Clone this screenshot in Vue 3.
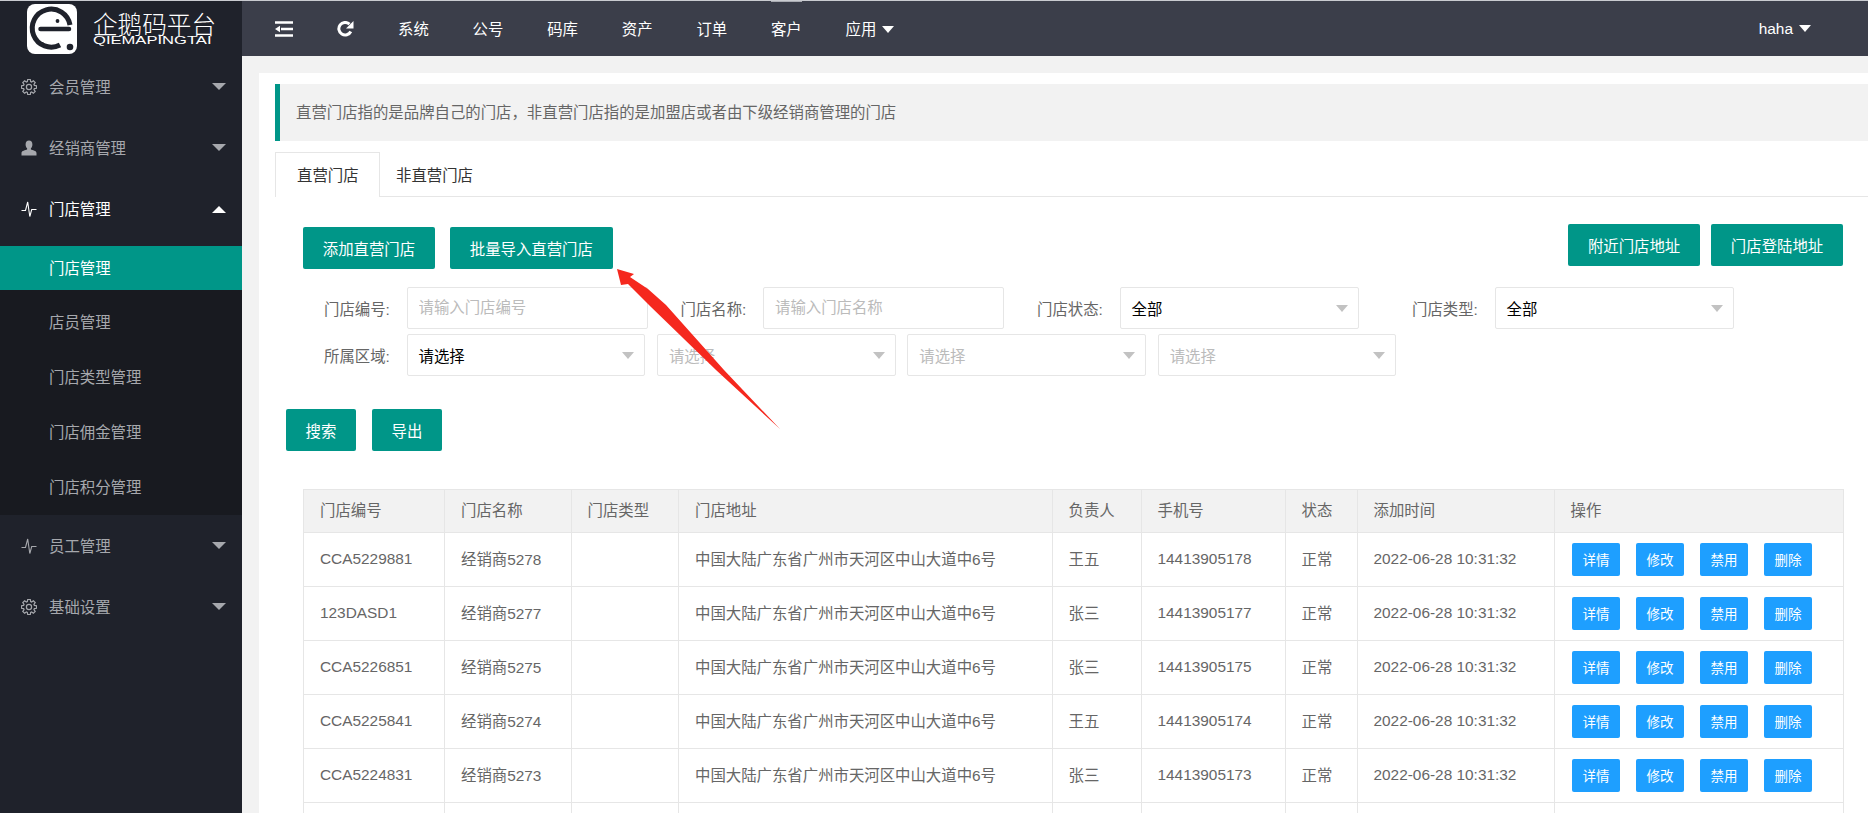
<template>
  <div class="page">
    <aside class="sidebar">
      <div class="brand">
        <svg class="brand-logo" viewBox="0 0 50 50">
          <rect width="50" height="50" rx="8" fill="#fff" />
          <path d="M43 21 A19 19 0 1 0 33 41" fill="none" stroke="#1f222b" stroke-width="5" />
          <path d="M13.5 25 H42" stroke="#1f222b" stroke-width="4.5" stroke-linecap="round" />
          <circle cx="30.5" cy="17" r="1.9" fill="#1f222b" />
          <circle cx="43" cy="43" r="3.3" fill="#1f222b" />
          <circle cx="15" cy="40" r="2" fill="#1f222b" />
        </svg>
        <div class="brand-text">
          <div class="brand-cn">企鹅码平台</div>
          <div class="brand-en">QIEMAPINGTAI</div>
        </div>
      </div>

      <div class="menu-item">
        <svg class="menu-icon" viewBox="0 0 16 16"><path :d="gearPath" fill="none" stroke="currentColor" stroke-width="1.2" /><circle cx="8" cy="8" r="2.6" fill="none" stroke="currentColor" stroke-width="1.2" /></svg>
        <span>会员管理</span><i class="caret"></i>
      </div>
      <div class="menu-item">
        <svg class="menu-icon" viewBox="0 0 16 16"><path d="M8 .5c2.2 0 3.4 1.700 3.400 3.900 0 1.700-.7 3-1.500 3.900v1.300c1.600.7 5.600 1.400 5.600 3.300V15.500H.5v-2.600c0-1.900 4-2.600 5.600-3.300V8.300C5.300 7.400 4.600 6.100 4.600 4.400 4.600 2.200 5.800.5 8 .5z" fill="currentColor" /></svg>
        <span>经销商管理</span><i class="caret"></i>
      </div>
      <div class="menu-item open">
        <svg class="menu-icon" viewBox="0 0 16 16"><path d="M.5 9.500H4.500L6.700 1 8.800 15.500 10.700 8.500H15.500" fill="none" stroke="currentColor" stroke-width="1.100" /></svg>
        <span>门店管理</span><i class="caret up"></i>
      </div>
      <div class="submenu">
        <div v-for="(item, index) in subMenu" :key="item" class="sub-item" :class="{ active: index === 0 }">{{ item }}</div>
      </div>
      <div class="menu-item">
        <svg class="menu-icon" viewBox="0 0 16 16"><path d="M.5 9.500H4.500L6.700 1 8.800 15.500 10.700 8.500H15.500" fill="none" stroke="currentColor" stroke-width="1.100" /></svg>
        <span>员工管理</span><i class="caret"></i>
      </div>
      <div class="menu-item">
        <svg class="menu-icon" viewBox="0 0 16 16"><path :d="gearPath" fill="none" stroke="currentColor" stroke-width="1.2" /><circle cx="8" cy="8" r="2.6" fill="none" stroke="currentColor" stroke-width="1.2" /></svg>
        <span>基础设置</span><i class="caret"></i>
      </div>
    </aside>

    <div class="right">
      <header class="topbar">
        <svg class="top-icon indent" viewBox="0 0 18 16">
          <path d="M0 1.500H18M6 8H18M0 14.500H18" stroke="#fff" stroke-width="2.700" />
          <path d="M0 8L5 4.800V11.200z" fill="#fff" />
        </svg>
        <svg class="top-icon refresh" viewBox="0 0 17 16">
          <path d="M13.800 10.500A6.300 6.300 0 1 1 12.500 3.200" fill="none" stroke="#fff" stroke-width="3" />
          <path d="M16.500 0V7.500H9z" fill="#fff" />
        </svg>
        <nav class="nav">
          <a v-for="item in navItems" :key="item" class="nav-link" :class="{ loading: item === '客户' }">{{ item }}</a>
          <a class="nav-link">应用<i class="caret white"></i></a>
        </nav>
        <div class="user">haha<i class="caret white"></i></div>
      </header>

      <main class="content">
        <section class="panel">
          <div class="alert">直营门店指的是品牌自己的门店，非直营门店指的是加盟店或者由下级经销商管理的门店</div>

          <div class="tabs">
            <div class="tab active">直营门店</div>
            <div class="tab">非直营门店</div>
          </div>

          <div class="toolbar">
            <div class="btn-group">
              <button class="btn">添加直营门店</button>
              <button class="btn">批量导入直营门店</button>
            </div>
            <div class="btn-group right-btns">
              <button class="btn">附近门店地址</button>
              <button class="btn">门店登陆地址</button>
            </div>
          </div>

          <div class="filters">
            <div class="filter-row">
              <div class="field">
                <label>门店编号:</label>
                <input class="control wide" placeholder="请输入门店编号" />
              </div>
              <div class="field">
                <label>门店名称:</label>
                <input class="control wide" placeholder="请输入门店名称" />
              </div>
              <div class="field">
                <label>门店状态:</label>
                <div class="control status select">全部<i class="caret grey"></i></div>
              </div>
              <div class="field far">
                <label>门店类型:</label>
                <div class="control status select">全部<i class="caret grey"></i></div>
              </div>
            </div>
            <div class="filter-row">
              <div class="field">
                <label>所属区域:</label>
                <div class="areas">
                  <div class="control select">请选择<i class="caret grey"></i></div>
                  <div v-for="n in 3" :key="n" class="control select muted">请选择<i class="caret grey"></i></div>
                </div>
              </div>
            </div>
          </div>

          <div class="search-btns">
            <button class="btn narrow">搜索</button>
            <button class="btn narrow">导出</button>
          </div>

          <table class="table">
            <colgroup>
              <col v-for="w in colWidths" :key="w.id" :style="{ width: w.px + 'px' }" />
            </colgroup>
            <thead>
              <tr>
                <th v-for="h in headers" :key="h">{{ h }}</th>
              </tr>
            </thead>
            <tbody>
              <tr v-for="row in rows" :key="row.code">
                <td>{{ row.code }}</td>
                <td class="cjk">{{ row.name }}</td>
                <td></td>
                <td class="cjk">中国大陆广东省广州市天河区中山大道中6号</td>
                <td class="cjk">{{ row.owner }}</td>
                <td>{{ row.phone }}</td>
                <td class="cjk">正常</td>
                <td>2022-06-28 10:31:32</td>
                <td class="actions">
                  <button v-for="a in actions" :key="a" class="mini">{{ a }}</button>
                </td>
              </tr>
              <tr>
                <td v-for="h in headers" :key="h"></td>
              </tr>
            </tbody>
          </table>
        </section>
      </main>
    </div>

    <svg class="annotation" viewBox="0 0 1868 813">
      <polygon points="617,269 634,274 630,277 648,289 666,305 724,370 780,429 716,370 650,306 628,284 621,285" fill="#f5281e" />
    </svg>
  </div>
</template>

<script setup>
const subMenu = ['门店管理', '店员管理', '门店类型管理', '门店佣金管理', '门店积分管理']
const navItems = ['系统', '公号', '码库', '资产', '订单', '客户']
const headers = ['门店编号', '门店名称', '门店类型', '门店地址', '负责人', '手机号', '状态', '添加时间', '操作']
const actions = ['详情', '修改', '禁用', '删除']

const colWidths = [141, 126.5, 107.5, 373.5, 89, 144, 72, 197, 289].map((px, id) => ({ id, px }))

const rows = [
  { code: 'CCA5229881', name: '经销商5278', owner: '王五', phone: '14413905178' },
  { code: '123DASD1', name: '经销商5277', owner: '张三', phone: '14413905177' },
  { code: 'CCA5226851', name: '经销商5275', owner: '张三', phone: '14413905175' },
  { code: 'CCA5225841', name: '经销商5274', owner: '王五', phone: '14413905174' },
  { code: 'CCA5224831', name: '经销商5273', owner: '张三', phone: '14413905173' }
]

// gear outline, 8 teeth
const buildGear = () => {
  const pts = []
  for (let i = 0; i < 8; i++) {
    const a = (i * Math.PI) / 4
    ;[[-0.3, 5.6], [-0.17, 7.6], [0.17, 7.6], [0.3, 5.6]].forEach(([d, r]) => {
      pts.push((8 + r * Math.sin(a + d)).toFixed(2) + ' ' + (8 - r * Math.cos(a + d)).toFixed(2))
    })
  }
  return 'M' + pts.join('L') + 'z'
}
const gearPath = buildGear()
</script>

<style>
html,
body {
  margin: 0;
  overflow: hidden;
  background: #f2f2f2;
}
</style>

<style scoped>
.page {
  position: relative;
  display: flex;
  height: 813px;
  overflow: hidden;
  border-top: 1px solid #c9cbd0;
  box-sizing: border-box;
  font-family: "Liberation Sans", "Noto Sans CJK SC", sans-serif;
  font-size: 15.4px;
  color: #666;
}

.sidebar {
  flex: 0 0 242px;
  background: #1f222b;
  color: #a6a8ad;
}

.brand {
  display: flex;
  align-items: center;
  height: 55px;
  padding-left: 27px;
  box-sizing: border-box;
}

.brand-logo {
  width: 50px;
  height: 50px;
  margin-top: 1px;
}

.brand-text {
  margin: -2px 0 0 16px;
  color: #fff;
}

.brand-cn {
  font-family: "Noto Sans CJK SC", sans-serif;
  font-weight: 300;
  font-size: 24.6px;
  line-height: 23px;
  height: 23px;
  white-space: nowrap;
}

.brand-en {
  font-size: 11.6px;
  line-height: 9px;
  height: 9px;
  transform: scaleX(1.43);
  transform-origin: left center;
}

.menu-item {
  display: flex;
  align-items: center;
  height: 61.300px;
  padding: 0 16px 0 21px;
  box-sizing: border-box;
}

.menu-item span {
  flex: 1;
  margin: -2px 0 0 12px;
}

.menu-item.open {
  color: #fff;
}

.menu-icon {
  width: 16px;
  height: 16px;
  flex: none;
}

.caret {
  display: inline-block;
  width: 0;
  height: 0;
  border-left: 7px solid transparent;
  border-right: 7px solid transparent;
  border-top: 7px solid #a6a8ad;
}

.caret.up {
  border-top: none;
  border-bottom: 7px solid #fff;
}

.caret.white {
  border-top-color: #fff;
  border-left-width: 6.500px;
  border-right-width: 6.500px;
  margin-left: 6px;
  vertical-align: 2px;
}

.caret.grey {
  border-top-color: #c2c2c2;
  border-left-width: 6px;
  border-right-width: 6px;
  position: absolute;
  right: 10px;
  top: 17px;
}

.submenu {
  background: #181a20;
  color: #a6a8ad;
}

.sub-item {
  display: flex;
  align-items: center;
  height: 55px;
  padding: 0 0 2px 49px;
  box-sizing: border-box;
}

.sub-item.active {
  height: 44px;
  margin: 6px 0 5px;
  background: #009688;
  color: #fff;
}

.right {
  flex: 1;
  min-width: 0;
  display: flex;
  flex-direction: column;
}

.topbar {
  flex: none;
  display: flex;
  align-items: center;
  height: 55px;
  padding: 0 57px 0 33px;
  background: #3b3e4a;
  color: #fff;
}

.top-icon {
  flex: none;
}

.indent {
  width: 18px;
  height: 16px;
  margin-right: 44px;
}

.refresh {
  width: 17px;
  height: 16px;
  margin-right: 44px;
}

.nav {
  display: flex;
  flex: 1;
  gap: 43.800px;
  margin-bottom: 2px;
}

.nav-link {
  position: relative;
  white-space: nowrap;
}

.nav-link.loading::before {
  content: "";
  position: absolute;
  left: 0;
  right: 0;
  top: -18px;
  height: 3px;
  background: #a9abb2;
}

.user {
  white-space: nowrap;
}

.content {
  flex: 1;
  padding: 17px 0 0 17px;
  min-height: 0;
}

.panel {
  background: #fff;
  padding: 11px 0 0 16px;
  height: 100%;
  box-sizing: border-box;
}

.alert {
  display: flex;
  align-items: center;
  height: 57px;
  padding: 0 0 3px 16px;
  box-sizing: border-box;
  border-left: 5px solid #009688;
  background: #f2f2f2;
}

.tabs {
  display: flex;
  margin-top: 11px;
  height: 45px;
  box-sizing: border-box;
  border-bottom: 1px solid #e6e6e6;
}

.tab {
  display: flex;
  align-items: center;
  padding: 0 0 3px 15px;
  height: 45px;
  box-sizing: border-box;
  color: #333;
  border: 1px solid transparent;
  border-bottom: none;
  white-space: nowrap;
}

.tab.active {
  width: 105px;
  padding-left: 21px;
  border-color: #e6e6e6;
  background: #fff;
}

.toolbar {
  display: flex;
  justify-content: space-between;
  align-items: flex-start;
  padding: 30px 25px 0 28px;
}

.right-btns {
  margin-top: -3px;
}

.btn-group {
  display: flex;
  gap: 15px;
}

.right-btns {
  gap: 11px;
}

.btn {
  height: 42px;
  padding: 0 19.800px;
  border: none;
  border-radius: 2px;
  background: #009688;
  color: #fff;
  font: inherit;
}

.btn.narrow {
  width: 70px;
  padding: 0;
}

.filters {
  display: flex;
  flex-direction: column;
  gap: 5px;
  padding: 18px 0 0 49px;
}

.filter-row {
  display: flex;
}

.field {
  display: flex;
  align-items: center;
  margin-right: 33px;
}

.field.far {
  margin-left: 20px;
}

.field label {
  width: 82.500px;
  flex: none;
}

.control {
  position: relative;
  width: 238.700px;
  height: 42px;
  box-sizing: border-box;
  padding: 0 11px;
  border: 1px solid #e6e6e6;
  border-radius: 2px;
  background: #fff;
  font: inherit;
  color: #000;
  outline: none;
}

.control::placeholder {
  color: #bbb;
}

.control.wide {
  width: 241px;
}

.control.status {
  width: 239.500px;
}

.select {
  display: flex;
  align-items: center;
}

.select.muted {
  color: #bbb;
}

.areas {
  display: flex;
  gap: 11.700px;
}

.search-btns {
  display: flex;
  gap: 16px;
  padding: 33px 0 0 11px;
}

.table {
  margin: 38px 0 0 28px;
  width: 1539.500px;
  table-layout: fixed;
  border-collapse: collapse;
}

.table th,
.table td {
  border: 1px solid #e6e6e6;
  padding: 0 0 0 16px;
  font-weight: 400;
  text-align: left;
  white-space: nowrap;
}

.table th {
  height: 42.600px;
  padding-bottom: 3px;
  background: #f2f2f2;
  box-sizing: border-box;
}

.table td {
  height: 54px;
  box-sizing: border-box;
}

.table td.cjk {
  padding-bottom: 3px;
}

.table td.actions {
  padding-left: 17.500px;
  font-size: 0;
}

.mini {
  width: 48px;
  height: 33px;
  margin-right: 16px;
  padding: 0;
  border: none;
  border-radius: 2px;
  background: #1e9fff;
  color: #fff;
  font-family: inherit;
  font-size: 13.500px;
}

.annotation {
  position: absolute;
  left: 0;
  top: -1px;
  width: 1868px;
  height: 813px;
  pointer-events: none;
}
</style>
